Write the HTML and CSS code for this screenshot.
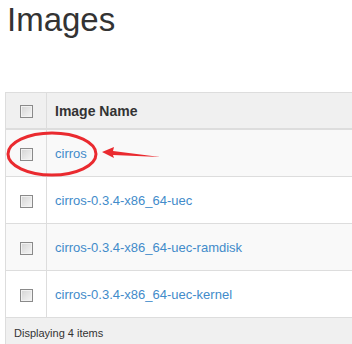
FILE: index.html
```html
<!DOCTYPE html>
<html>
  <head>
    <meta charset="UTF-8">
    <title>Images</title>
    <link rel="stylesheet" href="styles.css">
  </head>
<body>
  <h1 class="title">Images</h1>
  <div class="wrap">
    <table class="grid">
      <thead>
        <tr>
          <th class="check"><span class="box"></span></th>
          <th>Image Name</th>
        </tr>
      </thead>
      <tbody>
        <tr class="odd">
          <td class="check"><span class="box"></span></td>
          <td><a href="#">cirros</a></td>
        </tr>
        <tr>
          <td class="check"><span class="box"></span></td>
          <td><a href="#">cirros-0.3.4-x86_64-uec</a></td>
        </tr>
        <tr class="odd">
          <td class="check"><span class="box"></span></td>
          <td><a href="#">cirros-0.3.4-x86_64-uec-ramdisk</a></td>
        </tr>
        <tr>
          <td class="check"><span class="box"></span></td>
          <td><a href="#">cirros-0.3.4-x86_64-uec-kernel</a></td>
        </tr>
      </tbody>
      <tfoot>
        <tr>
          <td colspan="2">Displaying 4 items</td>
        </tr>
      </tfoot>
    </table>
    <svg class="mark" width="170" height="60" viewBox="0 0 170 60">
      <ellipse cx="47" cy="26" rx="44" ry="21" fill="none" stroke="#ea2a2f" stroke-width="3"/>
      <polygon points="97,24 109,19 108,23 155,29 108,27 109,30" fill="#ea2a2f"/>
    </svg>
  </div>
</body>
</html>
```

FILE: styles.css
```css
html {
  overflow: hidden;
}

body {
  margin: 0;
  font-family: "Liberation Sans", Arial, sans-serif;
  color: #333;
}

.title {
  margin: 0;
  padding: 0 0 0 7px;
  font-size: 33px;
  font-weight: normal;
  line-height: 40px;
}

.wrap {
  position: relative;
  overflow: hidden;
  margin-top: 52px;
  margin-left: 5px;
}

.grid {
  border-collapse: collapse;
  width: 360px;
  font-size: 13px;
}

.grid th,
.grid td {
  border: 1px solid #ddd;
  text-align: left;
  padding: 0 8px;
}

.grid thead th {
  background: #f0f0f0;
  height: 35px;
  font-size: 14px;
  font-weight: bold;
  border-bottom: 2px solid #ddd;
}

.grid tbody td {
  height: 46px;
  background: #fff;
}

.grid tbody tr.odd td {
  background: #f9f9f9;
}

.grid .check {
  width: 24px;
  text-align: center;
}

.grid tfoot td {
  background: #f0f0f0;
  height: 30px;
  font-size: 11px;
  vertical-align: top;
  padding-top: 9px;
}

a {
  color: #428bca;
  text-decoration: none;
}

.box {
  display: inline-block;
  width: 11px;
  height: 11px;
  border: 1px solid #8a8a8a;
  background: linear-gradient(135deg, #d4d4d4, #f6f6f6);
  box-shadow: inset 0 0 0 1px #f2f2f2;
  vertical-align: middle;
}

.mark {
  position: absolute;
  left: 0;
  top: 36px;
}
```
